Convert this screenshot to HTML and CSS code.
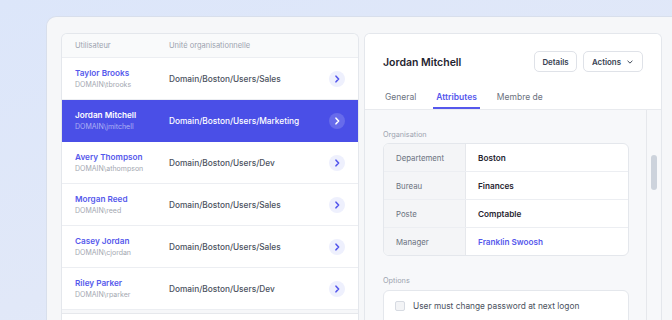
FILE: index.html
```html
<!DOCTYPE html>
<html lang="fr">
<head>
<meta charset="utf-8">
<title>Utilisateurs</title>
<link rel="stylesheet" href="styles.css">
</head>
<body>
<div class="window">
  <section class="list-panel">
    <div class="list-head">
      <div class="col-user">Utilisateur</div>
      <div class="col-ou">Unité organisationnelle</div>
    </div>
    <div class="row">
      <div class="col-user"><div class="name">Taylor Brooks</div><div class="login">DOMAIN\tbrooks</div></div>
      <div class="col-ou path">Domain/Boston/Users/Sales</div>
      <span class="go"><svg viewBox="0 0 16 16" width="16" height="16"><path d="M7 5.2 9.6 8 7 10.8" fill="none" stroke="currentColor" stroke-width="1.6" stroke-linecap="round" stroke-linejoin="round"/></svg></span>
    </div>
    <div class="row selected">
      <div class="col-user"><div class="name">Jordan Mitchell</div><div class="login">DOMAIN\jmitchell</div></div>
      <div class="col-ou path">Domain/Boston/Users/Marketing</div>
      <span class="go"><svg viewBox="0 0 16 16" width="16" height="16"><path d="M7 5.2 9.6 8 7 10.8" fill="none" stroke="currentColor" stroke-width="1.6" stroke-linecap="round" stroke-linejoin="round"/></svg></span>
    </div>
    <div class="row">
      <div class="col-user"><div class="name">Avery Thompson</div><div class="login">DOMAIN\athompson</div></div>
      <div class="col-ou path">Domain/Boston/Users/Dev</div>
      <span class="go"><svg viewBox="0 0 16 16" width="16" height="16"><path d="M7 5.2 9.6 8 7 10.8" fill="none" stroke="currentColor" stroke-width="1.6" stroke-linecap="round" stroke-linejoin="round"/></svg></span>
    </div>
    <div class="row">
      <div class="col-user"><div class="name">Morgan Reed</div><div class="login">DOMAIN\reed</div></div>
      <div class="col-ou path">Domain/Boston/Users/Sales</div>
      <span class="go"><svg viewBox="0 0 16 16" width="16" height="16"><path d="M7 5.2 9.6 8 7 10.8" fill="none" stroke="currentColor" stroke-width="1.6" stroke-linecap="round" stroke-linejoin="round"/></svg></span>
    </div>
    <div class="row">
      <div class="col-user"><div class="name">Casey Jordan</div><div class="login">DOMAIN\cjordan</div></div>
      <div class="col-ou path">Domain/Boston/Users/Sales</div>
      <span class="go"><svg viewBox="0 0 16 16" width="16" height="16"><path d="M7 5.2 9.6 8 7 10.8" fill="none" stroke="currentColor" stroke-width="1.6" stroke-linecap="round" stroke-linejoin="round"/></svg></span>
    </div>
    <div class="row">
      <div class="col-user"><div class="name">Riley Parker</div><div class="login">DOMAIN\rparker</div></div>
      <div class="col-ou path">Domain/Boston/Users/Dev</div>
      <span class="go"><svg viewBox="0 0 16 16" width="16" height="16"><path d="M7 5.2 9.6 8 7 10.8" fill="none" stroke="currentColor" stroke-width="1.6" stroke-linecap="round" stroke-linejoin="round"/></svg></span>
    </div>
    <div class="list-foot"></div>
  </section>

  <section class="detail-panel">
    <header class="detail-head">
      <div class="title-row">
        <h1 class="title">Jordan Mitchell</h1>
        <div class="actions">
          <button class="btn">Details</button>
          <button class="btn">Actions <svg viewBox="0 0 10 10" width="10" height="10"><path d="M2.3 3.8 5 6.4 7.7 3.8" fill="none" stroke="currentColor" stroke-width="1.2" stroke-linecap="round" stroke-linejoin="round"/></svg></button>
        </div>
      </div>
      <nav class="tabs">
        <span class="tab">General</span>
        <span class="tab active">Attributes</span>
        <span class="tab">Membre de</span>
      </nav>
    </header>
    <div class="detail-body">
      <div class="content">
        <div class="section-label">Organisation</div>
        <div class="attr-table">
          <div class="attr-row"><div class="attr-key">Departement</div><div class="attr-val">Boston</div></div>
          <div class="attr-row"><div class="attr-key">Bureau</div><div class="attr-val">Finances</div></div>
          <div class="attr-row"><div class="attr-key">Poste</div><div class="attr-val">Comptable</div></div>
          <div class="attr-row"><div class="attr-key">Manager</div><div class="attr-val link">Franklin Swoosh</div></div>
        </div>
        <div class="section-label options-label">Options</div>
        <div class="options">
          <label class="option"><span class="check"></span>User must change password at next logon</label>
        </div>
      </div>
      <div class="scrollbar"><div class="thumb"></div></div>
    </div>
  </section>
</div>
</body>
</html>
```

FILE: styles.css
```css
* { box-sizing: border-box; }
html, body { margin: 0; padding: 0; }
body {
  width: 672px;
  height: 320px;
  overflow: hidden;
  font-family: Inter, "Noto Sans", "Liberation Sans", sans-serif;
  background: linear-gradient(160deg, #dce6fa 0%, #e1e8f8 55%, #e6ecf9 100%);
}
.window {
  margin: 16px 0 0 46px;
  width: 640px;
  height: 304px;
  overflow: hidden;
  background: #f6f7f9;
  border: 1px solid #d8dfec;
  border-bottom: none;
  border-radius: 10px 10px 0 0;
  padding: 16px 0 0 14px;
  display: flex;
  gap: 5px;
  align-items: flex-start;
}

/* list */
.list-panel {
  width: 298px;
  flex: none;
  border: 1px solid #e4e7ec;
  border-bottom: none;
  border-radius: 6px 6px 0 0;
  background: #f6f7f9;
  overflow: hidden;
}
.list-head {
  height: 24px;
  background: #f9fafb;
  border-bottom: 1px solid #eceef2;
  display: flex;
  align-items: center;
  font-size: 7.5px;
  color: #9ca3af;
  padding-left: 13px;
}
.col-user { width: 94px; flex: none; }
.col-ou { flex: 1; }
.row {
  height: 42px;
  background: #fff;
  border-bottom: 1px solid #eceef2;
  display: flex;
  align-items: center;
  padding-left: 13px;
  padding-right: 13px;
}
.name {
  font-size: 8.2px;
  font-weight: 600;
  color: #5558ec;
  line-height: 11px;
}
.login {
  font-size: 7px;
  color: #a3a7b0;
  line-height: 10px;
  margin-top: 1px;
}
.path {
  font-size: 8.3px;
  font-weight: 500;
  color: #4b5260;
}
.go {
  width: 16px;
  height: 16px;
  border-radius: 50%;
  background: #eef0fd;
  color: #5558ec;
  display: flex;
  flex: none;
}
.row.selected { background: #4a4fe7; border-bottom-color: #4a4fe7; }
.row.selected .name { color: #fff; }
.row.selected .login { color: #aeb1f4; }
.row.selected .path { color: #fff; }
.row.selected .go { background: rgba(255,255,255,0.16); color: #fff; }
.list-foot {
  margin-top: 3px;
  height: 40px;
  background: #fff;
  border-top: 1px solid #e6e8ec;
}

/* detail */
.detail-panel {
  width: 298px;
  flex: none;
  border: 1px solid #e4e7ec;
  border-bottom: none;
  border-radius: 6px 6px 0 0;
  background: #f7f8fa;
  overflow: hidden;
  height: 288px;
}
.detail-head {
  background: #fff;
  border-bottom: 1px solid #e8eaee;
  padding: 17px 18px 0 18px;
}
.title-row {
  display: flex;
  align-items: center;
  justify-content: space-between;
  height: 21px;
}
.title {
  margin: 0;
  font-size: 10.5px;
  font-weight: 600;
  color: #1f2430;
  padding-top: 1px;
}
.actions { display: flex; gap: 6px; }
.btn {
  font-family: inherit;
  height: 21px;
  padding: 0 8px;
  border: 1px solid #dfe2e8;
  border-radius: 5px;
  background: #fff;
  font-size: 7.9px;
  font-weight: 600;
  color: #374151;
  display: flex;
  align-items: center;
  gap: 5px;
}
.btn:first-child { width: 43px; justify-content: center; }
.btn:last-child { width: 60px; justify-content: center; }
.tabs {
  display: flex;
  gap: 14px;
  margin-top: 14px;
  margin-left: -1px;
}
.tab {
  height: 23px;
  padding: 0 3px;
  display: flex;
  align-items: center;
  font-size: 8.5px;
  color: #6b7280;
  border-bottom: 2px solid transparent;
  padding-top: 1px;
}
.tab.active {
  color: #5558ec;
  font-weight: 600;
  border-bottom-color: #5558ec;
}
.detail-body {
  display: flex;
  height: 220px;
}
.content {
  flex: 1;
  padding: 20px 17px 0 18px;
}
.section-label {
  font-size: 7.3px;
  color: #9ca3af;
  line-height: 10px;
}
.attr-table {
  margin-top: 3px;
  background: #fff;
  border: 1px solid #e4e7ec;
  border-radius: 6px;
  overflow: hidden;
}
.attr-row {
  display: flex;
  height: 28px;
  border-top: 1px solid #eceef2;
}
.attr-row:first-child { border-top: none; height: 27px; }
.attr-key {
  width: 82px;
  flex: none;
  background: #f4f5f7;
  border-right: 1px solid #e6e8ec;
  padding-left: 12px;
  display: flex;
  align-items: center;
  font-size: 7.8px;
  color: #6b7280;
}
.attr-val {
  padding-left: 12px;
  display: flex;
  align-items: center;
  font-size: 8.2px;
  font-weight: 600;
  color: #1f2430;
}
.attr-val.link { color: #5558ec; }
.options-label { margin-top: 20px; }
.options {
  margin-top: 4px;
  background: #fff;
  border: 1px solid #e4e7ec;
  border-radius: 6px;
  padding: 10px 11px;
  height: 40px;
}
.option {
  display: flex;
  align-items: center;
  gap: 8px;
  font-size: 8.35px;
  color: #4b5260;
}
.check {
  width: 10px;
  height: 10px;
  border: 1px solid #d7dbe2;
  background: #f3f4f6;
  border-radius: 2px;
  flex: none;
}
.scrollbar {
  width: 15px;
  flex: none;
  border-left: 1px solid #e6e8ec;
  background: #f7f8fa;
  padding: 45px 0 0 4px;
}
.thumb {
  width: 6px;
  height: 35px;
  border-radius: 3px;
  background: #cdd3dc;
}
```
